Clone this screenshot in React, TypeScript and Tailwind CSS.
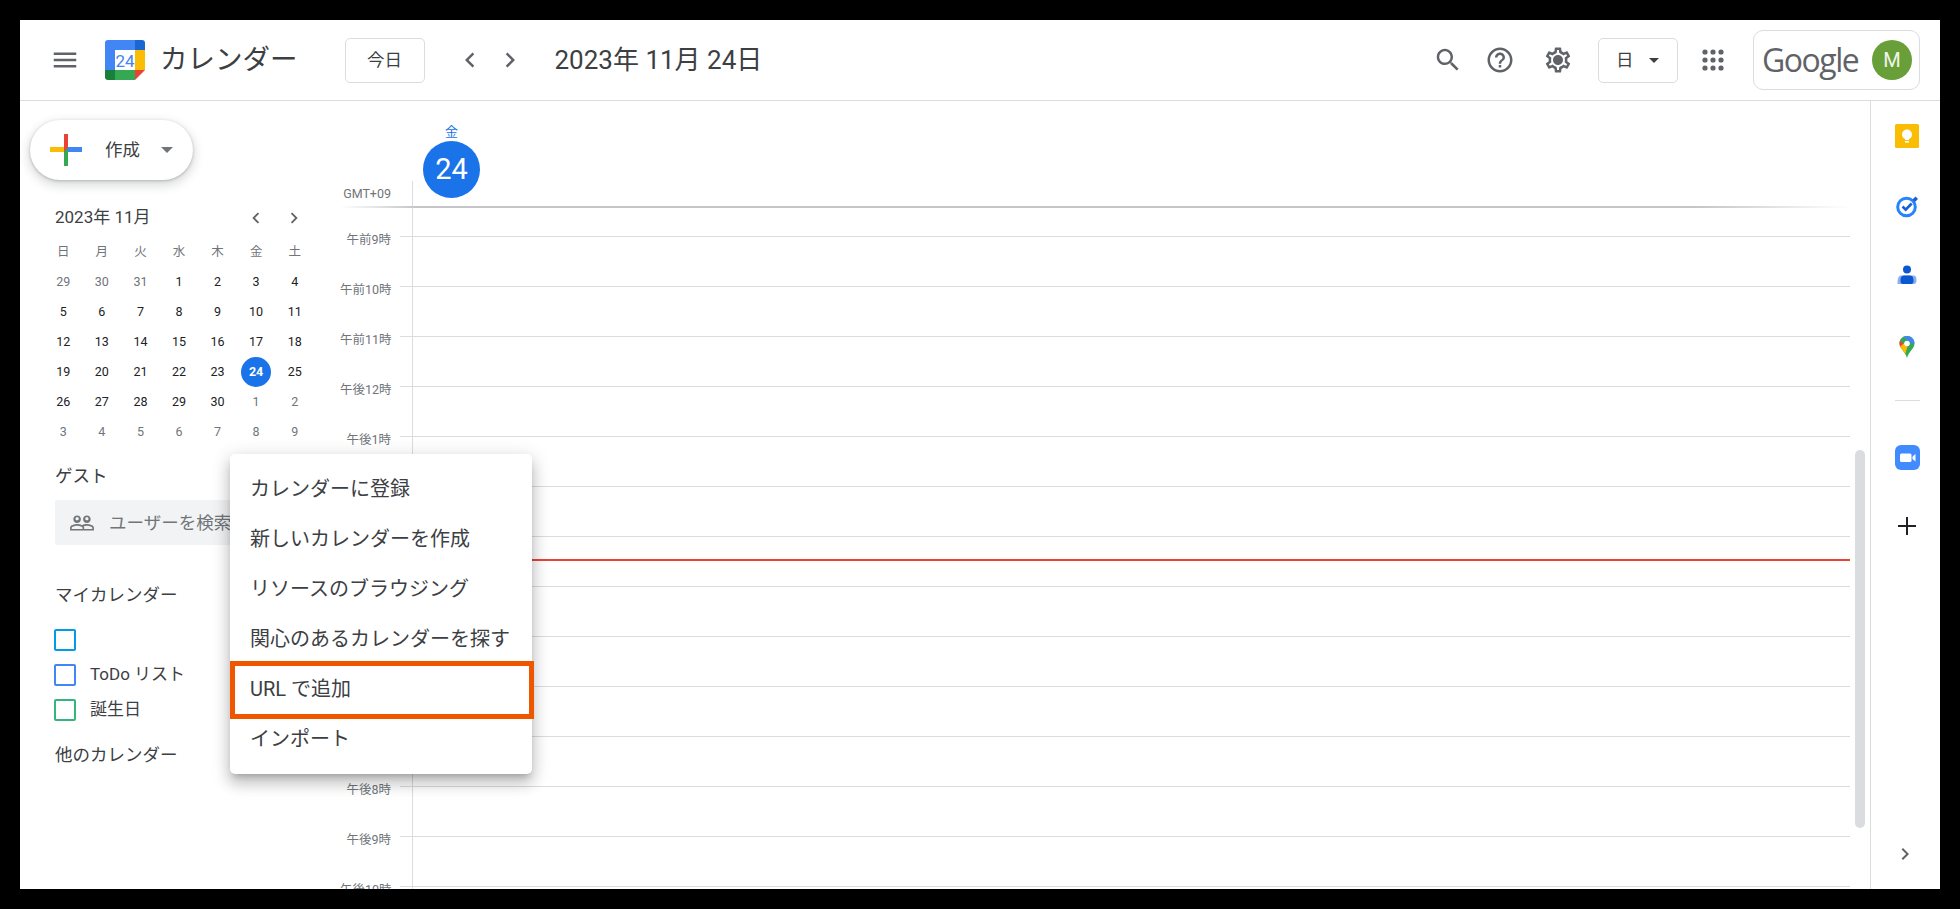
import React from 'react';

const ICON_PATHS = {
  menu: 'M3 18h18v-2H3v2zm0-5h18v-2H3v2zm0-7v2h18V6H3z',
  left: 'M15.41 7.41L14 6l-6 6 6 6 1.41-1.41L10.83 12z',
  right: 'M10 6L8.59 7.41 13.17 12l-4.58 4.59L10 18l6-6z',
  search:
    'M15.5 14h-.79l-.28-.27C15.41 12.59 16 11.11 16 9.5 16 5.91 13.09 3 9.5 3S3 5.91 3 9.5 5.91 16 9.5 16c1.61 0 3.09-.59 4.23-1.57l.27.28v.79l5 4.99L20.49 19l-4.99-5zm-6 0C7.01 14 5 11.99 5 9.5S7.01 5 9.5 5 14 7.01 14 9.5 11.99 14 9.5 14z',
  help: 'M11 18h2v-2h-2v2zm1-16C6.48 2 2 6.48 2 12s4.48 10 10 10 10-4.48 10-10S17.52 2 12 2zm0 18c-4.41 0-8-3.59-8-8s3.59-8 8-8 8 3.59 8 8-3.59 8-8 8zm0-14c-2.21 0-4 1.79-4 4h2c0-1.1.9-2 2-2s2 .9 2 2c0 2-3 1.75-3 5h2c0-2.25 3-2.5 3-5 0-2.21-1.79-4-4-4z',
  settings:
    'M19.43 12.98c.04-.32.07-.64.07-.98 0-.34-.03-.66-.07-.98l2.11-1.65c.19-.15.24-.42.12-.64l-2-3.46c-.09-.16-.26-.25-.44-.25-.06 0-.12.01-.17.03l-2.49 1c-.52-.4-1.08-.73-1.69-.98l-.38-2.65C14.46 2.18 14.25 2 14 2h-4c-.25 0-.46.18-.49.42l-.38 2.65c-.61.25-1.17.59-1.69.98l-2.49-1c-.06-.02-.12-.03-.18-.03-.17 0-.34.09-.43.25l-2 3.46c-.13.22-.07.49.12.64l2.11 1.65c-.04.32-.07.65-.07.98 0 .33.03.66.07.98l-2.11 1.65c-.19.15-.24.42-.12.64l2 3.46c.09.16.26.25.44.25.06 0 .12-.01.17-.03l2.49-1c.52.4 1.08.73 1.69.98l.38 2.65c.03.24.24.42.49.42h4c.25 0 .46-.18.49-.42l.38-2.65c.61-.25 1.17-.59 1.69-.98l2.49 1c.06.02.12.03.18.03.17 0 .34-.09.43-.25l2-3.46c.12-.22.07-.49-.12-.64l-2.11-1.65zm-1.98-1.71c.04.31.05.52.05.73 0 .21-.02.43-.05.73l-.14 1.13.89.7 1.08.84-.7 1.21-1.27-.51-1.04-.42-.9.68c-.43.32-.84.56-1.25.73l-1.06.43-.16 1.13-.2 1.35h-1.4l-.19-1.35-.16-1.13-1.06-.43c-.43-.18-.83-.41-1.23-.71l-.91-.7-1.06.43-1.27.51-.7-1.21 1.08-.84.89-.7-.14-1.13c-.03-.31-.05-.54-.05-.74s.02-.43.05-.73l.14-1.13-.89-.7-1.08-.84.7-1.21 1.27.51 1.04.42.9-.68c.43-.32.84-.56 1.25-.73l1.06-.43.16-1.13.2-1.35h1.39l.19 1.35.16 1.13 1.06.43c.43.18.83.41 1.23.71l.91.7 1.06-.43 1.27-.51.7 1.21-1.07.85-.89.7.14 1.13zM12 8c-2.21 0-4 1.79-4 4s1.79 4 4 4 4-1.79 4-4-1.79-4-4-4zm0 6c-1.1 0-2-.9-2-2s.9-2 2-2 2 .9 2 2-.9 2-2 2z',
  people:
    'M16.5 13c-1.2 0-3.07.34-4.5 1-1.43-.67-3.3-1-4.5-1C5.33 13 1 14.08 1 16.25V19h22v-2.75c0-2.17-4.33-3.25-6.5-3.25zm-4 4.5h-10v-1.25c0-.54 2.56-1.75 5-1.75s5 1.21 5 1.75v1.25zm9 0H14v-1.25c0-.46-.2-.86-.52-1.22.88-.3 1.96-.53 3.02-.53 2.44 0 5 1.21 5 1.75v1.25zM7.5 12c1.93 0 3.5-1.57 3.5-3.5S9.43 5 7.5 5 4 6.57 4 8.5 5.57 12 7.5 12zm0-5.5c.83 0 1.5.67 1.5 1.5s-.67 1.5-1.5 1.5S6 8.83 6 8s.67-1.5 1.5-1.5zm9 5.5c1.93 0 3.5-1.57 3.5-3.5S18.43 5 16.5 5 13 6.57 13 8.5s1.57 3.5 3.5 3.5zm0-5.5c.83 0 1.5.67 1.5 1.5s-.67 1.5-1.5 1.5S15 8.83 15 8s.67-1.5 1.5-1.5z',
};

function Icon({ name, size = 30, className = '' }: { name: keyof typeof ICON_PATHS; size?: number; className?: string }) {
  return (
    <svg width={size} height={size} viewBox="0 0 24 24" className={`shrink-0 fill-[#5f6368] ${className}`}>
      <path d={ICON_PATHS[name]} />
      {name === 'settings' && <circle cx="12" cy="12" r="2.5" />}
    </svg>
  );
}

function CalendarLogo() {
  return (
    <svg width="40" height="40" viewBox="0 0 40 40" className="shrink-0">
      <path d="M3 0h27v10H10v20H0V3a3 3 0 0 1 3-3z" fill="#4285f4" />
      <path d="M30 0h7a3 3 0 0 1 3 3v7H30z" fill="#1967d2" />
      <rect x="30" y="10" width="10" height="20" fill="#fbbc04" />
      <rect x="10" y="30" width="20" height="10" fill="#34a853" />
      <path d="M0 30h10v10H3a3 3 0 0 1-3-3z" fill="#188038" />
      <path d="M30 30h10L30 40z" fill="#ea4335" />
      <rect x="10" y="10" width="20" height="20" fill="#fff" />
      <text x="20" y="26.5" textAnchor="middle" fontSize="17" fontFamily="Roboto" fill="#4285f4">
        24
      </text>
    </svg>
  );
}

function CreatePlus() {
  return (
    <svg width="32" height="32" viewBox="0 0 32 32" className="shrink-0">
      <rect x="14" y="0" width="4" height="13" fill="#ea4335" />
      <rect x="18" y="13" width="14" height="5" fill="#4285f4" />
      <rect x="14" y="18" width="4" height="14" fill="#34a853" />
      <rect x="0" y="13" width="14" height="5" fill="#fbbc04" />
      <path d="M14 13h4v5h-4z" fill="#4285f4" />
      <path d="M14 18l4-5v5z" fill="#34a853" />
      <path d="M14 13h4l-4 5z" fill="#ea4335" />
    </svg>
  );
}

function KeepIcon() {
  return (
    <svg width="24" height="24" viewBox="0 0 24 24">
      <rect width="24" height="24" rx="1.5" fill="#fbbc04" />
      <circle cx="12" cy="10.5" r="5" fill="#fff" />
      <rect x="10" y="14" width="4" height="2" fill="#fff" />
      <rect x="10" y="17" width="4" height="1.6" fill="#fff" />
    </svg>
  );
}

function TasksIcon() {
  return (
    <svg width="24" height="24" viewBox="0 0 24 24">
      <circle cx="11.5" cy="12" r="8.8" fill="none" stroke="#2684fc" strokeWidth="3" />
      <path d="M7.5 11.5l3.2 3.2 6-6.2" fill="none" stroke="#1a5fd0" strokeWidth="2.6" />
      <path d="M17.5 4.500l3-3 2.500 2.500-3 3z" fill="#1a5fd0" />
    </svg>
  );
}

function ContactsIcon() {
  return (
    <svg width="24" height="24" viewBox="0 0 24 24">
      <circle cx="12" cy="5.5" r="4" fill="#0b57d0" />
      <path d="M6 11.5h12c3 0 3.5 2 3.5 4.5 0 3-1 4-3 4H2.5c.2-3 0-8.500 3.500-8.500z" fill="#8ab0f0" />
      <path d="M9 11.500h6c3 0 3.500 3 3.500 5 0 2-.5 3.500-2.500 3.500H8c-2 0-2.500-1.500-2.500-3.500 0-2 .5-5 3.500-5z" fill="#0b57d0" />
    </svg>
  );
}

function MapsIcon() {
  return (
    <svg width="24" height="24" viewBox="0 0 24 24">
      <defs>
        <clipPath id="pin">
          <path d="M12 1C7.600 1 4.500 4.300 4.500 8.500c0 5 5.500 7.500 7.500 14.500 2-7 7.500-9.500 7.500-14.500C19.500 4.300 16.400 1 12 1z" />
        </clipPath>
      </defs>
      <g clipPath="url(#pin)">
        <rect width="24" height="24" fill="#34a853" />
        <path d="M0 0h9.500L4 6.500z" fill="#4285f4" />
        <path d="M7 0h17v8.500h-7L12 5z" fill="#4285f4" />
        <path d="M0 4l3 0 6 5-5 4H0z" fill="#ea4335" />
        <path d="M4 12.500l5.500-4.500 3 3.500-3 10L3 16z" fill="#fbbc04" />
      </g>
      <circle cx="12" cy="8.500" r="2.800" fill="#fff" />
    </svg>
  );
}

function ZoomIcon() {
  return (
    <svg width="25" height="25" viewBox="0 0 25 25">
      <rect width="25" height="25" rx="6" fill="#428bff" />
      <rect x="5" y="8.500" width="11.500" height="8.500" rx="1.500" fill="#fff" />
      <path d="M17.500 11.500l3-2.500v7.500l-3-2.500z" fill="#fff" />
    </svg>
  );
}

function PlusIcon() {
  return (
    <svg width="18" height="18" viewBox="0 0 18 18" className="-ml-[1px] my-[3px]">
      <path d="M9 0v18M0 9h18" stroke="#202124" strokeWidth="2" />
    </svg>
  );
}

const weekdays = ['日', '月', '火', '水', '木', '金', '土'];
const days = [
  29, 30, 31, 1, 2, 3, 4, 5, 6, 7, 8, 9, 10, 11, 12, 13, 14, 15, 16, 17, 18, 19, 20, 21, 22, 23, 24, 25, 26, 27, 28,
  29, 30, 1, 2, 3, 4, 5, 6, 7, 8, 9,
];
const hours = [
  '午前9時', '午前10時', '午前11時', '午後12時', '午後1時', '午後2時', '午後3時',
  '午後4時', '午後5時', '午後6時', '午後7時', '午後8時', '午後9時', '午後10時',
];
const menuItems = [
  'カレンダーに登録',
  '新しいカレンダーを作成',
  'リソースのブラウジング',
  '関心のあるカレンダーを探す',
  'URL で追加',
  'インポート',
];
const calendars = [
  { label: '', border: 'border-[#039be5]' },
  { label: 'ToDo リスト', border: 'border-[#4285f4]' },
  { label: '誕生日', border: 'border-[#33b679]' },
];

function MiniCalendar() {
  return (
    <div className="ml-[24px] mt-[23px] w-[270px]">
      <div className="flex h-[30px] items-center pl-[11px]">
        <span className="text-[17px] text-[#3c4043]">2023年 11月</span>
        <Icon name="left" size={22} className="ml-auto mr-[16px]" />
        <Icon name="right" size={22} className="mr-[9px]" />
      </div>
      <div className="mt-[5px] grid grid-cols-7">
        {weekdays.map((w) => (
          <div key={w} className="flex h-[29px] items-center justify-center text-[12.5px] text-[#70757a]">
            {w}
          </div>
        ))}
        {days.map((d, i) => {
          const outside = i < 3 || i >= 33;
          const today = i === 26;
          return (
            <div key={i} className="flex h-[30px] items-center justify-center">
              {today ? (
                <span className="flex size-[30px] items-center justify-center rounded-full bg-[#1a73e8] text-[12.5px] font-bold text-white">
                  {d}
                </span>
              ) : (
                <span className={`text-[12.5px] ${outside ? 'text-[#70757a]' : 'text-[#202124]'}`}>{d}</span>
              )}
            </div>
          );
        })}
      </div>
    </div>
  );
}

function Sidebar() {
  return (
    <aside className="w-[320px] shrink-0">
      <button className="ml-[10px] mt-[19px] flex h-[60px] w-[163px] items-center rounded-full bg-white pl-[20px] shadow-[0_1px_3px_rgba(60,64,67,0.3),0_4px_8px_3px_rgba(60,64,67,0.15)]">
        <CreatePlus />
        <span className="ml-[23px] text-[17.5px] text-[#3c4043]">作成</span>
        <span className="ml-[21px] size-0 border-x-[6px] border-t-[6px] border-x-transparent border-t-[#70757a]" />
      </button>
      <MiniCalendar />
      <div className="ml-[35px]">
        <div className="mt-[17px] h-[24px] text-[17.5px] leading-[24px] text-[#3c4043]">ゲスト</div>
        <div className="mt-[12px] flex h-[45px] w-[257px] items-center rounded-[2px] bg-[#f1f3f4] pl-[14px]">
          <Icon name="people" size={26} className="fill-[#70757a]" />
          <span className="ml-[14px] whitespace-nowrap pt-[2px] text-[17.5px] text-[#70757a]">ユーザーを検索</span>
        </div>
        <div className="mt-[38px] h-[24px] text-[17.5px] leading-[24px] text-[#3c4043]">マイカレンダー</div>
        <div className="mt-[15px]">
          {calendars.map((c) => (
            <div key={c.border} className="flex h-[35px] items-center">
              <span className={`-ml-[1px] size-[22px] rounded-[2px] border-2 ${c.border}`} />
              <span className="ml-[14px] text-[17px] text-[#3c4043]">{c.label}</span>
            </div>
          ))}
        </div>
        <div className="mt-[16px] h-[24px] text-[17.5px] leading-[24px] text-[#3c4043]">他のカレンダー</div>
      </div>
    </aside>
  );
}

function DayGrid() {
  return (
    <main className="flex min-w-0 flex-1 flex-col overflow-hidden">
      <div className="flex h-[105px] shrink-0">
        <div className="w-[73px] shrink-0 pt-[80px]">
          <div className="h-[25px] border-r border-[#dadce0] pr-[21px] pt-[1px] text-right text-[12.5px] leading-[24px] text-[#70757a]">
            GMT+09
          </div>
        </div>
        <div className="ml-[10px] flex w-[57px] flex-col items-center pt-[24px]">
          <span className="text-[13px] leading-[14px] text-[#1a73e8]">金</span>
          <span className="mt-[2px] flex size-[57px] items-center justify-center rounded-full bg-[#1a73e8] pt-[1px] text-[29px] text-white">
            24
          </span>
        </div>
      </div>
      <div className="h-[2px] shrink-0 bg-[linear-gradient(to_right,#ffffff,#c4c6c9_5%,#c4c6c9_90%,#ffffff)]" />
      <div className="relative flex-1">
        <div className="absolute left-[72px] right-0 top-[351px] z-10 h-[2px] bg-[#ea4335]" />
        <div className="flex h-[28px]">
          <div className="w-[72px] shrink-0" />
          <div className="flex-1 border-l border-[#dadce0]" />
        </div>
        {hours.map((h) => (
          <div key={h} className="flex h-[50px]">
            <div className="flex w-[72px] shrink-0">
              <span className="-mt-[5px] h-[18px] w-[51px] shrink-0 whitespace-nowrap text-right text-[12.5px] leading-[18px] text-[#70757a]">
                {h}
              </span>
              <span className="ml-[9px] h-px w-[12px] bg-[#dadce0]" />
            </div>
            <div className="flex-1 border-l border-t border-[#dadce0]" />
          </div>
        ))}
      </div>
    </main>
  );
}

function RightPanel() {
  return (
    <aside className="flex w-[70px] shrink-0 flex-col items-center border-l border-[#dadce0] pb-[23px] pl-[3px]">
      <div className="mt-[23px] h-[24px]"><KeepIcon /></div>
      <div className="mt-[47px] h-[24px]"><TasksIcon /></div>
      <div className="mt-[45px] h-[24px]"><ContactsIcon /></div>
      <div className="mt-[47px] h-[24px]"><MapsIcon /></div>
      <div className="mt-[41px] h-px w-[25px] bg-[#dadce0]" />
      <div className="mt-[44px] h-[25px]"><ZoomIcon /></div>
      <div className="mt-[44px] h-[24px]"><PlusIcon /></div>
      <Icon name="right" size={24} className="-ml-[4px] mt-auto" />
    </aside>
  );
}

function AddMenu() {
  return (
    <div className="absolute left-[230px] top-[454px] z-20 h-[320px] w-[302px] rounded-[5px] bg-white pt-[10px] shadow-[0_5px_6px_-3px_rgba(0,0,0,0.2),0_10px_14px_1px_rgba(0,0,0,0.14),0_4px_18px_3px_rgba(0,0,0,0.12)]">
      {menuItems.map((item, i) => (
        <div key={item} className="relative flex h-[50px] items-center whitespace-nowrap pl-[20px] text-[20px] text-[#3c4043]">
          {item}
          {i === 4 && <span className="absolute -top-[3px] left-0 h-[58px] w-[304px] border-[5px] border-[#ef5600]" />}
        </div>
      ))}
    </div>
  );
}

export default function App() {
  return (
    <div className="relative h-[909px] w-[1960px] overflow-hidden bg-black p-[20px] font-['Roboto','Noto_Sans_CJK_JP',sans-serif]">
      <div className="flex h-[869px] flex-col overflow-hidden bg-white">
        <header className="flex h-[81px] shrink-0 items-center border-b border-[#dadce0] pl-[30px] pr-[20px]">
          <Icon name="menu" />
          <div className="ml-[25px]"><CalendarLogo /></div>
          <span className="ml-[15px] text-[27.5px] text-[#3c4043]">カレンダー</span>
          <button className="ml-[47px] h-[45px] w-[80px] rounded-[5px] border border-[#dadce0] text-[17.5px] text-[#3c4043]">
            今日
          </button>
          <Icon name="left" className="ml-[30px]" />
          <Icon name="right" className="ml-[10px]" />
          <span className="ml-[30px] text-[26px] text-[#3c4043]">2023年 11月 24日</span>
          <Icon name="search" className="ml-auto" />
          <Icon name="help" className="ml-[22px]" />
          <Icon name="settings" className="ml-[28px]" />
          <button className="ml-[25px] flex h-[45px] w-[80px] items-center rounded-[5px] border border-[#dadce0] pl-[17px] text-[17.5px] text-[#3c4043]">
            日
            <span className="ml-[15px] size-0 border-x-[5px] border-t-[5px] border-x-transparent border-t-[#3c4043]" />
          </button>
          <svg width="30" height="30" viewBox="0 0 30 30" className="ml-[20px] shrink-0 fill-[#5f6368]">
            {[7, 15, 23].map((y) =>
              [7, 15, 23].map((x) => <circle key={`${x}-${y}`} cx={x} cy={y} r="2.600" />)
            )}
          </svg>
          <div className="ml-[25px] flex h-[60px] w-[167px] items-center rounded-[10px] border border-[#dadce0] pl-[8px]">
            <span className="font-['Open_Sans',sans-serif] text-[32px] font-medium tracking-[-1.5px] text-[#5f6368]">Google</span>
            <span className="ml-auto mr-[7px] flex size-[40px] items-center justify-center rounded-full bg-[#689f38] text-[20px] text-white/90">
              M
            </span>
          </div>
        </header>
        <div className="flex min-h-0 flex-1">
          <Sidebar />
          <DayGrid />
          <div className="w-[20px] shrink-0">
            <div className="mx-auto mt-[349px] h-[378px] w-[10px] rounded-full bg-[#dadce0]" />
          </div>
          <RightPanel />
        </div>
      </div>
      <AddMenu />
    </div>
  );
}
